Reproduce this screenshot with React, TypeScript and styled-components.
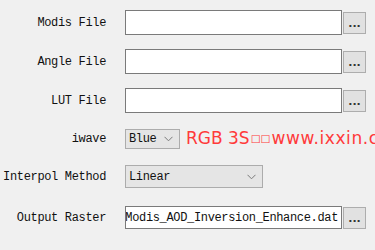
import React from "react";
import styled, { createGlobalStyle } from "styled-components";

const Global = createGlobalStyle`
  html, body { margin: 0; padding: 0; background: #f0f0f0; }
  body { width: 375px; height: 250px; overflow: hidden; }
`;

const Form = styled.div`
  display: flex;
  flex-direction: column;
  padding-top: 10px;
  width: 375px;
  height: 250px;
  box-sizing: border-box;
  overflow: hidden;
`;

const Row = styled.div<{ $h: number; $mt: number }>`
  display: flex;
  align-items: center;
  height: ${(p) => p.$h}px;
  margin-top: ${(p) => p.$mt}px;
  white-space: nowrap;
`;

const Label = styled.div`
  flex: 0 0 106px;
  width: 106px;
  text-align: right;
  margin-right: 19px;
  font-family: "Liberation Mono", monospace;
  font-size: 12px;
  letter-spacing: -0.34px;
  color: #111;
`;

const TextBox = styled.div<{ $h: number }>`
  flex-shrink: 0;
  box-sizing: border-box;
  width: 217px;
  height: ${(p) => p.$h}px;
  background: #fff;
  border: 1px solid #7a7a7a;
  display: flex;
  align-items: center;
  justify-content: flex-end;
  overflow: hidden;
  padding-right: 3px;
  font-family: "Liberation Mono", monospace;
  font-size: 12px;
  letter-spacing: -0.34px;
  color: #111;
`;

const BrowseButton = styled.div`
  flex-shrink: 0;
  box-sizing: border-box;
  width: 23px;
  height: 22px;
  margin-left: 1px;
  background: #e1e1e1;
  border: 1px solid #adadad;
  display: flex;
  align-items: flex-end;
  justify-content: center;
  padding-bottom: 4px;
  font-family: "DejaVu Sans", sans-serif;
  font-size: 11px;
  line-height: 1;
  font-weight: bold;
  color: #333;
`;

const Select = styled.div<{ $w: number; $h: number }>`
  flex-shrink: 0;
  box-sizing: border-box;
  width: ${(p) => p.$w}px;
  height: ${(p) => p.$h}px;
  background: #e5e5e5;
  border: 1px solid #acacac;
  display: flex;
  align-items: center;
  justify-content: space-between;
  padding-left: 3px;
  padding-right: 6px;
  font-family: "Liberation Mono", monospace;
  font-size: 12px;
  letter-spacing: -0.34px;
  color: #111;
`;

const Watermark = styled.div`
  flex-shrink: 0;
  margin-left: 6px;
  font-family: "DejaVu Sans", sans-serif;
  font-size: 17px;
  color: #ff3a3a;
  display: flex;
  align-items: center;
  margin-top: -2px;
`;

const Tofu = styled.span`
  font-size: 10.5px;
  font-family: "DejaVu Sans", sans-serif;
  margin: 0 1px 0 1px;
`;

const Url = styled.span`
  letter-spacing: 0.6px;
`;

const Chevron = () => (
  <svg width="9" height="6" viewBox="0 0 9 6" fill="none">
    <path d="M0.5 0.8 L4.5 4.8 L8.5 0.8" stroke="#7a7a7a" strokeWidth="1" />
  </svg>
);

const FileRow = ({
  label,
  value,
  h,
  mt,
  boxH,
}: {
  label: string;
  value?: string;
  h: number;
  mt: number;
  boxH: number;
}) => (
  <Row $h={h} $mt={mt}>
    <Label>{label}</Label>
    <TextBox $h={boxH}>{value}</TextBox>
    <BrowseButton>...</BrowseButton>
  </Row>
);

export default function App() {
  return (
    <>
      <Global />
      <Form>
        <FileRow label="Modis File" h={25} mt={0} boxH={25} />
        <FileRow label="Angle File" h={25} mt={14} boxH={25} />
        <FileRow label="LUT File" h={25} mt={14} boxH={25} />
        <Row $h={20} $mt={16}>
          <Label>iwave</Label>
          <Select $w={55} $h={20}>
            <span>Blue</span>
            <Chevron />
          </Select>
          <Watermark>
            RGB 3S<Tofu>□□</Tofu>
            <Url>www.ixxin.cn</Url>
          </Watermark>
        </Row>
        <Row $h={23} $mt={16}>
          <Label>Interpol Method</Label>
          <Select $w={138} $h={23}>
            <span>Linear</span>
            <Chevron />
          </Select>
        </Row>
        <FileRow
          label="Output Raster"
          value="Modis_AOD_Inversion_Enhance.dat"
          h={23}
          mt={18}
          boxH={23}
        />
      </Form>
    </>
  );
}
